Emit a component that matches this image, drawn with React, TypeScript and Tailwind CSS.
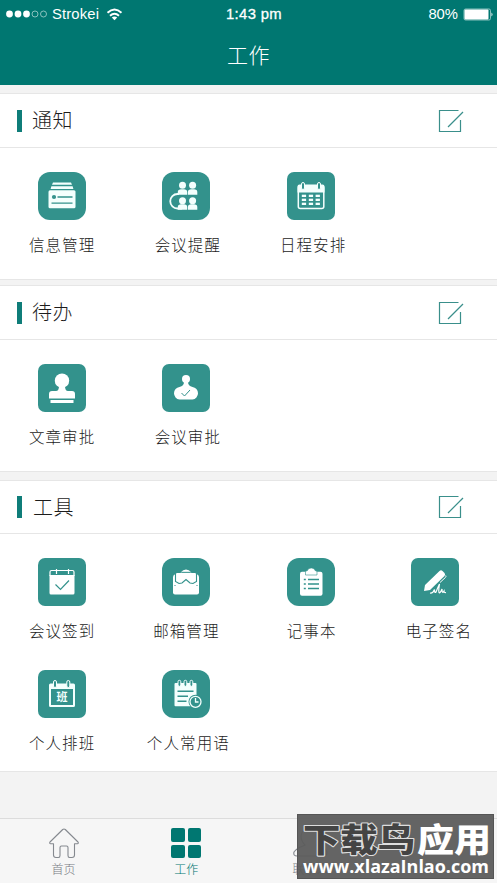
import React from "react";

const GLYPH_BG = "#33928c";

function EditIcon() {
  return (
    <svg width="26" height="24" viewBox="0 0 26 24" fill="none" stroke="#3a8f8b" strokeWidth="1.2">
      <path d="M20.5 1.500H1.500V22.500H22.500V11" />
      <path d="M10 18L25 3" />
    </svg>
  );
}

function InfoIcon() {
  return (
    <svg width="48" height="48" viewBox="0 0 48 48" fill="#f4fffd">
      <path d="M15 10.500h18l1 2.200H14zM13.400 14.200h21.200l.8 2.900H12.600z" />
      <rect x="10.500" y="18.200" width="27" height="18" rx="1.500" />
      <circle cx="16" cy="25" r="2.100" fill={GLYPH_BG} />
      <path d="M19.500 25h15M13.500 31.200h21" stroke={GLYPH_BG} strokeWidth="1.300" />
    </svg>
  );
}

function PeopleIcon() {
  const spots: [number, number][] = [[20.500, 13.300], [30.600, 13.300], [20.500, 28.300], [30.600, 28.300]];
  return (
    <svg width="48" height="48" viewBox="0 0 48 48" fill="#f4fffd">
      <path d="M17 22h-1.500a7 7 0 0 0 0 14.500H20" fill="none" stroke="#f4fffd" strokeWidth="1.800" />
      {spots.map(([x, y], i) => (
        <g key={i}>
          <circle cx={x} cy={y + (i > 1 ? 0.500 : 0)} r="3.500" />
          <path d={`M${x - 4.700} ${y + 9.500}v-3q0-2 2-2.200l1.300-.3h2.800l1.300.3q2 .2 2 2.200v3z`} />
        </g>
      ))}
    </svg>
  );
}

function CalendarIcon() {
  return (
    <svg width="48" height="48" viewBox="0 0 48 48" fill="#f4fffd">
      <rect x="11.300" y="14" width="25.500" height="22.500" rx="2" fill="none" stroke="#f4fffd" strokeWidth="1.500" />
      <path d="M10.500 20.500v-6q0-2 2-2h23q2 0 2 2v6z" />
      <g fill={GLYPH_BG} stroke="#f4fffd" strokeWidth="1">
        <rect x="14.500" y="10.500" width="3" height="7" rx="1.500" />
        <rect x="30.500" y="10.500" width="3" height="7" rx="1.500" />
      </g>
      {[22.700, 26.700, 30.700].map((y) =>
        [14.800, 21.800, 28.600].map((x) => <rect key={`${x}-${y}`} x={x} y={y} width="4.300" height="2.300" />)
      )}
    </svg>
  );
}

function StampIcon() {
  return (
    <svg width="48" height="48" viewBox="0 0 48 48" fill="#fff">
      <circle cx="24" cy="16.700" r="7.200" />
      <path d="M21 22h6q0 5 3 5h4q3 0 3 3v4.500H11V30q0-3 3-3h4q3 0 3-5zM12.500 36h23v3h-23z" />
    </svg>
  );
}

function CloudStampIcon() {
  return (
    <svg width="48" height="48" viewBox="0 0 48 48" fill="#fff">
      <circle cx="24" cy="15" r="4" />
      <path d="M22 18h4q0 4 4.500 5a6.300 6.300 0 0 1 0 12.500h-13a6.300 6.300 0 0 1 0-12.500Q22 22 22 18" />
      <path d="M19.500 29l3 3 5.500-6" fill="none" stroke={GLYPH_BG} strokeWidth="1" />
    </svg>
  );
}

function CheckInIcon() {
  return (
    <svg width="48" height="48" viewBox="0 0 48 48" fill="#fff">
      <path d="M11.500 17v18q0 1.500 1.500 1.500h22q1.500 0 1.500-1.500V17z" />
      <path d="M12 18v-4q0-1.500 1.500-1.500h21q1.500 0 1.500 1.500v4M18.500 11v5M30.500 11v5" fill="none" stroke="#fff" strokeWidth="1.200" />
      <path d="M17.500 26.500l5 5L31 22.500" fill="none" stroke={GLYPH_BG} strokeWidth="1.200" />
    </svg>
  );
}

function MailIcon() {
  return (
    <svg width="48" height="48" viewBox="0 0 48 48" fill="#fff">
      <path d="M11 19q0-2 2.500-3h21q2.500 1 2.500 3v15.500q0 2-2 2H13q-2 0-2-2z" />
      <path d="M14.500 14.500h19q1 .5 1 1.500v7.500l-3.500 2-3-.5-4-3.500-4 3.500-3 .5-3.500-2V16q0-1 1-1.500z" fill="#fff" stroke={GLYPH_BG} strokeWidth="1.100" />
      <path d="M18.500 14.500q5.500-6 11 0z" />
      <path d="M19.500 14.300h9" stroke={GLYPH_BG} strokeWidth=".9" />
      <path d="M12.500 27l1 1M35.500 27l-1 1" stroke={GLYPH_BG} />
    </svg>
  );
}

function NotebookIcon() {
  return (
    <svg width="48" height="48" viewBox="0 0 48 48" fill="#fff">
      <rect x="13" y="13.800" width="22.500" height="24" rx="2" />
      <path d="M18.500 17v-3q0-1.500 2-1.500Q21 10 24.300 10t3.700 2.500q2 0 2 1.500v3z" stroke={GLYPH_BG} strokeWidth=".6" />
      <path d="M16.800 21.500h2M21 21.500h11M16.800 26h2M21 26h11M16.800 30.500h2M21 30.500h11" stroke={GLYPH_BG} strokeWidth="1.400" />
    </svg>
  );
}

function SignatureIcon() {
  return (
    <svg width="48" height="48" viewBox="0 0 48 48" fill="#fff">
      <path d="M13 33l1-6L28.500 13q1.500-1.500 3 0l2 2q1.200 1.500 0 3L19 32z" />
      <path d="M34.700 17.500q.7 1-.3 2L29 24.500" fill="none" stroke="#fff" strokeWidth="1" />
      <path d="M19 35q3 .5 4.500-3.500 0 4 1.500 2.500 2-5 3.500-8-1.500 9 0 9 1.500-1 2.500-4 0 3.500 1 3.500l1-1.500q0 2 2 1.500" fill="none" stroke="#fff" strokeWidth="1.200" />
    </svg>
  );
}

function ShiftIcon() {
  return (
    <svg width="48" height="48" viewBox="0 0 48 48" fill="#f4fffd">
      <path d="M12.500 13.500h23q1.500 0 1.500 1.500v20.500q0 1.500-1.500 1.500h-23q-1.500 0-1.500-1.500V15q0-1.500 1.500-1.500zM13 19v16h22V19z" fillRule="evenodd" />
      <g fill={GLYPH_BG} stroke="#f4fffd" strokeWidth="1">
        <rect x="15.500" y="10.500" width="3" height="7" rx="1.500" />
        <rect x="28.800" y="10.500" width="3" height="7" rx="1.500" />
      </g>
      <text x="24" y="31" textAnchor="middle" className="text-[11px] font-bold">班</text>
    </svg>
  );
}

function PhrasesIcon() {
  return (
    <svg width="48" height="48" viewBox="0 0 48 48" fill="#f4fffd">
      <rect x="12.500" y="13" width="22" height="23.300" rx="1" />
      <g fill={GLYPH_BG} stroke="#f4fffd" strokeWidth="1">
        <rect x="16" y="10.300" width="2.800" height="6" rx="1.400" />
        <rect x="22" y="10.300" width="2.800" height="6" rx="1.400" />
        <rect x="28" y="10.300" width="2.800" height="6" rx="1.400" />
      </g>
      <path d="M15.500 21.300h16M15.500 26.300h10.500M15.500 31.300h9" stroke={GLYPH_BG} strokeWidth="1.400" />
      <circle cx="33.500" cy="31.800" r="7" fill={GLYPH_BG} />
      <circle cx="33.500" cy="31.800" r="5.500" fill={GLYPH_BG} stroke="#f4fffd" strokeWidth="1.300" />
      <path d="M33.500 28v4h3" fill="none" stroke="#f4fffd" strokeWidth="1.300" />
    </svg>
  );
}

type Item = { label: string; icon: React.ReactNode; round?: boolean; shift?: string };

function Tile({ label, icon, round, shift }: Item) {
  return (
    <div className="flex h-28 flex-col items-center">
      <div className={`h-12 w-12 bg-[#33928c] ${round ? "rounded-[12px]" : "rounded-[7px]"}`}>{icon}</div>
      <span className={`mt-[12px] whitespace-nowrap text-[15.5px] leading-6 tracking-[1.1px] text-[#1c1c1c] ${shift ?? ""}`}>{label}</span>
    </div>
  );
}

function Section({ title, items, className, head, titleGap }: { title: string; items: Item[]; className: string; head: string; titleGap: string }) {
  return (
    <section className={`border-y border-[#e6e6e6] bg-white ${className}`}>
      <div className={`flex items-center border-b border-[#e6e6e6] pl-[17px] pr-[33px] ${head}`}>
        <span className="h-[22px] w-[5px] bg-[#0f7d79]" />
        <h2 className={`-mt-px flex-1 text-[20px] leading-7 tracking-[.5px] text-[#1c1c1c] ${titleGap}`}>{title}</h2>
        <EditIcon />
      </div>
      <div className="grid grid-cols-4 pt-[24px]">
        {items.map((it) => (
          <Tile key={it.label} {...it} />
        ))}
      </div>
    </section>
  );
}

export default function App() {
  return (
    <div className="relative flex h-[883px] w-[497px] flex-col overflow-hidden bg-[#f3f3f3] font-['Noto_Sans_CJK_SC',sans-serif] font-light">
      <header className="h-[85px] bg-[#007771] text-white">
        <div className="grid h-7 grid-cols-3 items-center font-['Liberation_Sans',sans-serif] text-[14.8px] font-normal">
          <div className="flex items-center pl-[6px]">
            <svg width="42" height="8" viewBox="0 0 42 8" fill="#fff">
              <circle cx="3.500" cy="4" r="3.400" />
              <circle cx="12" cy="4" r="3.400" />
              <circle cx="20.500" cy="4" r="3.400" />
              <g fill="none" stroke="#a9d3d0" strokeWidth=".8">
                <circle cx="29" cy="4" r="3" />
                <circle cx="37.500" cy="4" r="3" />
              </g>
            </svg>
            <span className="ml-[4px] w-[48px] tracking-[.15px]">Strokei</span>
            <svg className="ml-[6px]" width="17" height="13" viewBox="0 0 17 13" fill="none" stroke="#fff" strokeWidth="1.900">
              <path d="M1.500 4.800q7-6.500 14 0M4 7.800q4.500-4 9 0" />
              <path d="M5.800 9.600q2.700-2.200 5.400 0L8.500 12.300z" fill="#fff" stroke="none" />
            </svg>
          </div>
          <span className="pl-[11px] text-center tracking-[.35px] [-webkit-text-stroke:.3px_white]">1:43 pm</span>
          <div className="flex items-center justify-end pr-[3px]">
            <span>80%</span>
            <svg className="ml-[5px]" width="31" height="13" viewBox="0 0 31 13" fill="#fff">
              <rect x="1" y="1" width="26.500" height="11" rx="1.500" fill="none" stroke="#a9d3d0" strokeWidth=".8" />
              <rect x="1.500" y="1.500" width="24" height="10" rx="1" />
              <path d="M28.500 4.500q2 2 0 4z" />
            </svg>
          </div>
        </div>
        <h1 className="pt-[10px] text-center text-[21px] leading-8 tracking-[.4px]">工作</h1>
      </header>

      <main className="flex flex-1 flex-col">
        <Section
          title="通知"
          className="mt-[8px] h-[187px]"
          head="h-[54px]"
          titleGap="ml-[10px]"
          items={[
            { label: "信息管理", icon: <InfoIcon />, round: true },
            { label: "会议提醒", icon: <PeopleIcon />, round: true, shift: "pl-[3px]" },
            { label: "日程安排", icon: <CalendarIcon />, shift: "pl-[5px]" },
          ]}
        />
        <Section
          title="待办"
          className="mt-[5px] h-[187px]"
          head="h-[54px]"
          titleGap="ml-[10px]"
          items={[
            { label: "文章审批", icon: <StampIcon /> },
            { label: "会议审批", icon: <CloudStampIcon />, shift: "pl-[3px]" },
          ]}
        />
        <Section
          title="工具"
          className="mt-[8px] h-[292px]"
          head="h-[53px]"
          titleGap="ml-[11px]"
          items={[
            { label: "会议签到", icon: <CheckInIcon /> },
            { label: "邮箱管理", icon: <MailIcon />, round: true },
            { label: "记事本", icon: <NotebookIcon />, round: true, shift: "pl-[2px]" },
            { label: "电子签名", icon: <SignatureIcon />, shift: "pl-[8px]" },
            { label: "个人排班", icon: <ShiftIcon /> },
            { label: "个人常用语", icon: <PhrasesIcon />, round: true, shift: "pl-[4px]" },
          ]}
        />
      </main>

      <nav className="grid h-[65px] grid-cols-4 border-t border-[#dcdcdc] bg-[#f6f6f6] text-[12px] leading-4 text-[#777b82]">
        <div className="flex flex-col items-center pl-[3px] pt-[8px]">
          <svg width="32" height="32" viewBox="0 0 32 32" fill="none" stroke="#85898f" strokeWidth="1.100" strokeLinejoin="round">
            <path d="M14.700 2.500q1.300-1 2.600 0L30 15q1 1.500-.5 1.700h-3V28q0 2.500-2.500 2.500h-2.500q-1.500 0-1.500-2v-8q0-1.500-1.500-1.500h-5q-1.500 0-1.500 1.500v8q0 2-1.500 2H8Q5.500 30.500 5.500 28V16.700h-3Q1 16.500 2 15z" />
          </svg>
          <span className="mt-[2px]">首页</span>
        </div>
        <div className="flex flex-col items-center pt-[9px] text-[#007771]">
          <div className="grid grid-cols-2 gap-[3px]">
            {[0, 1, 2, 3].map((n) => (
              <span key={n} className="h-[13.500px] w-[13.500px] rounded-[2px] bg-[#007771]" />
            ))}
          </div>
          <span className="mt-[3px]">工作</span>
        </div>
        <div className="flex flex-col items-center pt-[8px]">
          <svg width="36" height="32" viewBox="0 0 36 32" fill="none" stroke="#85898f" strokeWidth="1.100">
            <path d="M12 18q-4-4-4-9 1-8 10-8t10 8q0 5-4 9 9 3 10 7 0 4-3 4H4q-4 0-3-4 3-4 9-6z" />
          </svg>
          <span className="mt-[2px]">联系人</span>
        </div>
      </nav>

      <div className="absolute left-[297px] top-[814px] h-[65px] w-[197px] overflow-hidden border border-[#555] bg-[#5c5c5c]/95 text-white">
        <svg width="195" height="63" viewBox="0 0 195 63">
          <g className="text-[36px] font-black" strokeLinejoin="round">
            <text x="5" y="38" textLength="112" lengthAdjust="spacingAndGlyphs" fill="#444" stroke="#ddd" strokeWidth="2.400" paintOrder="stroke" transform="translate(0 3) scale(1 .9)">下载鸟</text>
            <text x="119" y="38" textLength="74" lengthAdjust="spacingAndGlyphs" fill="#fff" transform="translate(0 3) scale(1 .9)">应用</text>
          </g>
          <text x="5" y="58" textLength="186" lengthAdjust="spacingAndGlyphs" fill="#fff" className="font-['Open_Sans',sans-serif] text-[18px] font-bold">www.xlazaInlao.com</text>
        </svg>
      </div>
    </div>
  );
}
